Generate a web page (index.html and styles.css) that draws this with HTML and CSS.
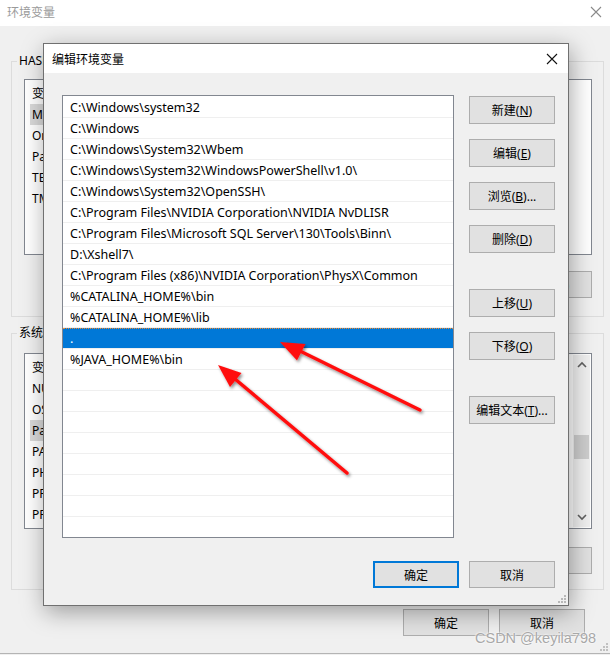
FILE: index.html
```html
<!DOCTYPE html>
<html lang="zh-CN">

<head>
    <meta charset="UTF-8">
    <meta name="viewport" content="width=device-width, initial-scale=1.0">
    <title>编辑环境变量</title>
    <link rel="stylesheet" href="styles.css">
</head>

<body>
    <!-- 背后的"环境变量"窗口 -->
    <div class="win">
        <div class="win-title">
            <span class="win-name">环境变量</span>
            <svg class="win-close" width="12" height="12" viewBox="0 0 12 12">
                <path d="M1 1L11 11M11 1L1 11" stroke="#8a8a8a" stroke-width="1.1" fill="none" />
            </svg>
        </div>
        <div class="win-body">
            <fieldset class="group">
                <legend>HASEE 的用户变量(U)</legend>
                <div class="vlist">
                    <div class="vrow">变量</div>
                    <div class="vrow sel">MozillaPlugins</div>
                    <div class="vrow">OneDrive</div>
                    <div class="vrow">Path</div>
                    <div class="vrow">TEMP</div>
                    <div class="vrow">TMP</div>
                </div>
                <div class="grp-btns">
                    <button class="btn">新建(<u>N</u>)...</button>
                    <button class="btn">编辑(<u>E</u>)...</button>
                    <button class="btn">删除(<u>D</u>)</button>
                </div>
            </fieldset>

            <fieldset class="group group-sys">
                <legend>系统变量(<u>S</u>)</legend>
                <div class="vlist">
                    <div class="vrow">变量</div>
                    <div class="vrow">NUMBER_OF_PROCESSORS</div>
                    <div class="vrow">OS</div>
                    <div class="vrow sel">Path</div>
                    <div class="vrow">PATHEXT</div>
                    <div class="vrow">PHPRC</div>
                    <div class="vrow">PROCESSOR_ARCHITECTURE</div>
                    <div class="vrow">PROCESSOR_IDENTIFIER</div>
                    <div class="vscroll">
                        <svg width="16" height="16" viewBox="0 0 16 16">
                            <path d="M4 10L8 6L12 10" stroke="#606060" stroke-width="1.6" fill="none" />
                        </svg>
                        <div class="thumb-track"><div class="thumb"></div></div>
                        <svg width="16" height="16" viewBox="0 0 16 16">
                            <path d="M4 6L8 10L12 6" stroke="#606060" stroke-width="1.6" fill="none" />
                        </svg>
                    </div>
                </div>
                <div class="grp-btns">
                    <button class="btn">新建(<u>W</u>)...</button>
                    <button class="btn">编辑(<u>I</u>)...</button>
                    <button class="btn">删除(<u>L</u>)</button>
                </div>
            </fieldset>

            <div class="win-foot">
                <button class="btn">确定</button>
                <button class="btn">取消</button>
            </div>
        </div>
        <svg class="grip win-grip" width="8" height="8" viewBox="0 0 8 8">
            <rect x="6" y="0" width="2" height="2" fill="#c0c0c0" />
            <rect x="3" y="3" width="2" height="2" fill="#c0c0c0" />
            <rect x="6" y="3" width="2" height="2" fill="#c0c0c0" />
            <rect x="0" y="6" width="2" height="2" fill="#c0c0c0" />
            <rect x="3" y="6" width="2" height="2" fill="#c0c0c0" />
            <rect x="6" y="6" width="2" height="2" fill="#c0c0c0" />
        </svg>
    </div>

    <!-- 编辑环境变量 对话框 -->
    <div class="dialog">
        <div class="dlg-title">
            <span>编辑环境变量</span>
            <svg class="dlg-close" width="12" height="12" viewBox="0 0 12 12">
                <path d="M1 1L11 11M11 1L1 11" stroke="#111" stroke-width="1.1" fill="none" />
            </svg>
        </div>
        <div class="dlg-body">
            <div class="path-list">
                <div class="prow">C:\Windows\system32</div>
                <div class="prow">C:\Windows</div>
                <div class="prow">C:\Windows\System32\Wbem</div>
                <div class="prow">C:\Windows\System32\WindowsPowerShell\v1.0\</div>
                <div class="prow">C:\Windows\System32\OpenSSH\</div>
                <div class="prow">C:\Program Files\NVIDIA Corporation\NVIDIA NvDLISR</div>
                <div class="prow">C:\Program Files\Microsoft SQL Server\130\Tools\Binn\</div>
                <div class="prow">D:\Xshell7\</div>
                <div class="prow">C:\Program Files (x86)\NVIDIA Corporation\PhysX\Common</div>
                <div class="prow">%CATALINA_HOME%\bin</div>
                <div class="prow">%CATALINA_HOME%\lib</div>
                <div class="prow active">.</div>
                <div class="prow">%JAVA_HOME%\bin</div>
                <div class="prow"></div>
                <div class="prow"></div>
                <div class="prow"></div>
                <div class="prow"></div>
                <div class="prow"></div>
                <div class="prow"></div>
                <div class="prow"></div>
                <div class="prow"></div>
            </div>

            <div class="side-btns">
                <button class="btn">新建(<u>N</u>)</button>
                <button class="btn">编辑(<u>E</u>)</button>
                <button class="btn">浏览(<u>B</u>)...</button>
                <button class="btn">删除(<u>D</u>)</button>
                <button class="btn gap-top">上移(<u>U</u>)</button>
                <button class="btn">下移(<u>O</u>)</button>
                <button class="btn gap-top">编辑文本(<u>T</u>)...</button>
            </div>

            <div class="dlg-foot">
                <button class="btn default">确定</button>
                <button class="btn">取消</button>
            </div>
        </div>
        <svg class="grip dlg-grip" width="8" height="8" viewBox="0 0 8 8">
            <rect x="6" y="0" width="2" height="2" fill="#b8b8b8" />
            <rect x="3" y="3" width="2" height="2" fill="#b8b8b8" />
            <rect x="6" y="3" width="2" height="2" fill="#b8b8b8" />
            <rect x="0" y="6" width="2" height="2" fill="#b8b8b8" />
            <rect x="3" y="6" width="2" height="2" fill="#b8b8b8" />
            <rect x="6" y="6" width="2" height="2" fill="#b8b8b8" />
        </svg>
    </div>

    <!-- 红色箭头标注 -->
    <svg class="marks" width="610" height="655" viewBox="0 0 610 655">
        <defs>
            <filter id="shadow" x="-20%" y="-20%" width="140%" height="140%">
                <feDropShadow dx="1.5" dy="2" stdDeviation="1.5" flood-color="#000" flood-opacity="0.45" />
            </filter>
        </defs>
        <g filter="url(#shadow)" fill="#ff1010" stroke="#ff1010">
            <line x1="420" y1="410" x2="300" y2="351" stroke-width="3.5" stroke-linecap="round" />
            <polygon points="280,342 305.5,344 297,360.5" stroke="none" />
            <line x1="347" y1="473" x2="235" y2="379" stroke-width="3.5" stroke-linecap="round" />
            <polygon points="218,365 241.5,373 230,387" stroke="none" />
        </g>
    </svg>

    <div class="watermark">CSDN @keyila798</div>
</body>

</html>
```

FILE: styles.css
```css
* {
    box-sizing: border-box;
}

body {
    margin: 0;
    width: 610px;
    height: 655px;
    overflow: hidden;
    background-color: #f0f0f0;
    font-family: "Noto Sans", "Noto Sans CJK SC", sans-serif;
    font-size: 12px;
    color: #000;
    position: relative;
}

button {
    font-family: inherit;
    font-size: 12px;
}

/* 背后的窗口 */
.win {
    width: 610px;
    height: 654px;
    border-bottom: 1px solid #b4b4b4;
    background-color: #f0f0f0;
    position: relative;
}

.win-title {
    height: 26px;
    background-color: #fff;
    display: flex;
    align-items: center;
    justify-content: space-between;
    padding: 0 8px 2px 7px;
}

.win-name {
    color: #9a9a9a;
    font-size: 12px;
}

.win-body {
    padding: 27px 6px 0 11px;
}

.group {
    margin: 0;
    width: 593px;
    border: 1px solid #dcdcdc;
    padding: 10px 11px 18px 5px;
}

.group legend {
    padding: 0 2px;
    line-height: 16px;
    font-size: 12px;
}

.group-sys {
    margin-top: 8px;
    padding-top: 12px;
    padding-bottom: 15px;
}

.vlist {
    margin-left: 7px;
    height: 176px;
    border: 1px solid #828790;
    background-color: #fff;
    padding: 3px 0 0 5px;
    position: relative;
}

.vrow {
    width: 240px;
    height: 21px;
    line-height: 22px;
    padding-left: 2px;
    white-space: nowrap;
}

.vrow.sel {
    width: 160px;
    background-color: #d9d9d9;
}

.vscroll {
    position: absolute;
    right: 1px;
    top: 1px;
    bottom: 1px;
    width: 17px;
    background-color: #f0f0f0;
    display: flex;
    flex-direction: column;
    align-items: center;
    padding: 2px 0;
}

.thumb-track {
    flex: 1;
    width: 100%;
    padding-top: 62px;
}

.thumb {
    width: 15px;
    margin: 0 auto;
    height: 24px;
    background-color: #cdcdcd;
}

.grp-btns {
    display: flex;
    justify-content: flex-end;
    gap: 10px;
    margin-top: 16px;
}

.group-sys .grp-btns {
    margin-top: 18px;
}

.btn {
    width: 86px;
    height: 27px;
    background-color: #e1e1e1;
    border: 1px solid #adadad;
    padding: 0;
    color: #000;
}

.win-foot {
    display: flex;
    justify-content: flex-end;
    gap: 10px;
    padding: 19px 19px 0 0;
}

.grip {
    position: absolute;
    display: block;
}

.win-grip {
    right: 2px;
    bottom: 2px;
}

/* 编辑环境变量 对话框 */
.dialog {
    position: absolute;
    left: 43px;
    top: 43px;
    width: 526px;
    height: 563px;
    border: 1px solid #707070;
    background-color: #f0f0f0;
    box-shadow: 2px 6px 22px rgba(0, 0, 0, 0.35);
}

.dlg-title {
    height: 29px;
    background-color: #fff;
    display: flex;
    align-items: center;
    justify-content: space-between;
    padding: 0 10px 0 8px;
}

.dlg-body {
    display: grid;
    grid-template-columns: 392px 86px;
    column-gap: 15px;
    padding: 22px 0 0 18px;
}

.path-list {
    height: 443px;
    border: 1px solid #828790;
    background-color: #fff;
    padding-top: 1px;
    overflow: hidden;
}

.prow {
    height: 21px;
    line-height: 22px;
    font-size: 12.5px;
    border-bottom: 1px solid #efefef;
    padding-left: 7px;
    white-space: nowrap;
    overflow: hidden;
}

.prow.active {
    background-color: #0078d7;
    color: #fff;
    border-top: 1px dotted #f08a30;
    line-height: 20px;
}

.side-btns {
    display: flex;
    flex-direction: column;
    gap: 15px;
    padding-top: 1px;
}

.side-btns .btn {
    height: 28px;
}

.side-btns .gap-top {
    margin-top: 21px;
}

.dlg-foot {
    grid-column: 1 / 3;
    display: flex;
    justify-content: flex-end;
    gap: 10px;
    margin-top: 23px;
}

.dlg-foot .btn {
    height: 27px;
}

.btn.default {
    border: 2px solid #0078d7;
}

.dlg-grip {
    right: 2px;
    bottom: 2px;
}

/* 标注与水印 */
.marks {
    position: absolute;
    left: 0;
    top: 0;
    pointer-events: none;
}

.watermark {
    position: absolute;
    left: 475px;
    top: 630px;
    font-family: "Liberation Sans", "Noto Sans", sans-serif;
    font-size: 14.5px;
    color: #a8a8a8;
    text-shadow: 0 0 2px #fff, 0 0 2px #fff;
}
```
